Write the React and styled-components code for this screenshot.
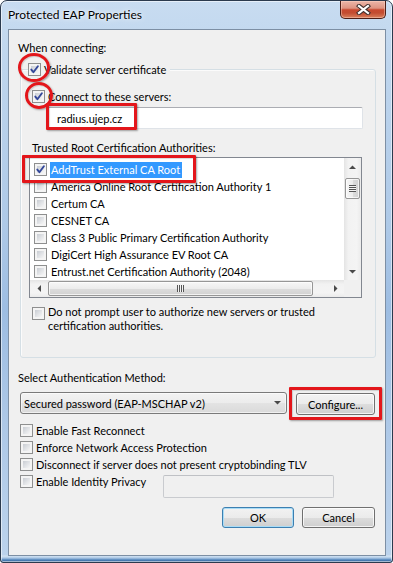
import React from "react";
import styled, { createGlobalStyle } from "styled-components";

const GlobalStyle = createGlobalStyle`
  * { box-sizing: border-box; }
  html, body { margin: 0; padding: 0; background: #ffffff; }
  body {
    font-family: Lato, "Liberation Sans", Arial, sans-serif;
    font-size: 11px;
    color: #000;
  }
`;

const Window = styled.div`
  width: 393px;
  height: 563px;
  display: flex;
  flex-direction: column;
  border: 1px solid #2b3a4e;
  border-radius: 7px 7px 3px 3px;
  overflow: hidden;
  background:
    linear-gradient(to bottom, transparent 0, transparent 554px, #d4e4f3 555px, #a9c6e4 557px, #4f82ba 559px, #2c5b90 561px),
    linear-gradient(to bottom, #c8dcf1 0%, #bed5ed 12%, #aec9e7 40%, #9dbde2 55%, #adc8e7 75%, #bcd3ec 100%);
  box-shadow: inset 0 0 0 1px rgba(255, 255, 255, 0.55);
`;

const TitleBar = styled.div`
  flex: 0 0 28px;
  height: 28px;
  display: flex;
  align-items: flex-start;
  justify-content: space-between;
  padding: 0 6px 0 7px;
`;

const Title = styled.div`
  margin-top: 6px;
  line-height: 15px;
  font-size: 12px;
  color: #000;
  text-shadow: 0 0 6px rgba(255, 255, 255, 0.95), 0 0 2px rgba(255, 255, 255, 0.8);
`;

const CloseButton = styled.div`
  width: 46px;
  height: 18px;
  display: flex;
  align-items: center;
  justify-content: center;
  border: 1px solid #4d1e16;
  border-top: none;
  border-radius: 0 0 5px 5px;
  background: linear-gradient(to bottom, #ecb6a8 0%, #de9482 42%, #c8492f 52%, #c24c31 70%, #d9805c 100%);
  box-shadow: inset 0 0 0 1px rgba(255, 215, 200, 0.45);
`;

const Client = styled.div`
  position: relative;
  flex: 1;
  margin: 0 6px 6px 7px;
  border: 1px solid #7d8fa4;
  background: #f0f0f0;
  padding: 0 9px;
  display: flex;
  flex-direction: column;
  align-items: flex-start;
`;

const Text = styled.div`
  line-height: 15px;
  white-space: nowrap;
  margin: ${(p) => p.$mt || 0}px 0 0 ${(p) => p.$ml || 0}px;
`;

const Group = styled.div`
  margin: 14px 0 0 2px;
  width: 356px;
  height: 289px;
  border: 1px solid #d5dfe5;
  border-radius: 3px;
  box-shadow: inset 1px 1px 0 #fbfbfb;
  display: flex;
  flex-direction: column;
  align-items: flex-start;
`;

const Legend = styled.div`
  display: flex;
  align-items: center;
  gap: 3px;
  height: 16px;
  margin: -9px 0 0 7px;
  padding-right: 4px;
  background: #f0f0f0;
  white-space: nowrap;
`;

const CheckRow = styled.div`
  display: flex;
  align-items: ${(p) => (p.$top ? "flex-start" : "center")};
  gap: 3px;
  height: ${(p) => (p.$h ? `${p.$h}px` : "auto")};
  width: ${(p) => (p.$w ? `${p.$w}px` : "auto")};
  margin: ${(p) => p.$mt || 0}px 0 0 ${(p) => p.$ml || 0}px;
  white-space: nowrap;
`;

const MultiLine = styled.div`
  line-height: 14px;
`;

const BoxOuter = styled.span`
  position: relative;
  flex: 0 0 13px;
  width: 13px;
  height: 13px;
  margin-top: ${(p) => p.$mt || 0}px;
  border: 1px solid #8e8f8f;
  background: #f4f4f4;
  display: grid;
  place-items: center;
  &::before {
    content: "";
    position: absolute;
    inset: 1px;
    border: 1px solid #f4f4f4;
    background: linear-gradient(135deg, #c9cdd3 0%, #e2e4e7 55%, #f6f6f6 100%);
  }
  & > svg {
    position: relative;
    z-index: 1;
  }
`;

const CheckBox = ({ checked, mt }) => (
  <BoxOuter $mt={mt}>
    {checked && (
      <svg width="11" height="11" viewBox="0 0 11 11">
        <path
          d="M2.3 5.6 L4.4 8.2 L8.9 2.2"
          fill="none"
          stroke="#34489a"
          strokeWidth="1.9"
          strokeLinecap="round"
          strokeLinejoin="round"
        />
      </svg>
    )}
  </BoxOuter>
);

const TextField = styled.div`
  width: ${(p) => p.$w}px;
  height: ${(p) => p.$h}px;
  margin: ${(p) => p.$mt || 0}px 0 0 ${(p) => p.$ml || 0}px;
  border: 1px solid ${(p) => (p.$disabled ? "#c9cbcf" : "#dfe3e8")};
  border-top-color: ${(p) => (p.$disabled ? "#bfc1c5" : "#abadb3")};
  border-radius: 2px;
  background: ${(p) => (p.$disabled ? "#f0f0f0" : "#ffffff")};
  padding-left: 9px;
  display: flex;
  align-items: center;
  white-space: nowrap;
`;

const ListBox = styled.div`
  margin: 2px 0 0 8px;
  width: 333px;
  height: 141px;
  border: 1px solid #828790;
  background: #fff;
  display: grid;
  grid-template-columns: 314px 17px;
  grid-template-rows: 122px 17px;
`;

const ListItems = styled.div`
  padding-top: 3px;
  overflow: hidden;
`;

const ListRow = styled.div`
  display: flex;
  align-items: center;
  height: 17px;
  padding-left: 4px;
  white-space: nowrap;
`;

const ItemText = styled.span`
  margin-left: 3px;
  padding: 0 2px 0 1px;
  line-height: 16px;
  background: ${(p) => (p.$selected ? "#3399ff" : "transparent")};
  color: ${(p) => (p.$selected ? "#ffffff" : "#000000")};
`;

const VScroll = styled.div`
  display: flex;
  flex-direction: column;
  align-items: center;
  background: linear-gradient(to right, #e4e4e4, #f2f2f2 25%, #f4f4f4 75%, #ebebeb);
`;

const HScroll = styled.div`
  display: flex;
  align-items: center;
  background: linear-gradient(to bottom, #e4e4e4, #f2f2f2 25%, #f4f4f4 75%, #ebebeb);
`;

const Corner = styled.div`
  background: #f0f0f0;
`;

const ArrowBtn = styled.div`
  flex: 0 0 17px;
  width: 17px;
  height: 17px;
  display: grid;
  place-items: center;
  margin-top: ${(p) => (p.$end ? "auto" : "0")};
  margin-left: ${(p) => (p.$push ? "auto" : "0")};
`;

const VThumb = styled.div`
  width: 15px;
  height: 21px;
  margin-top: 3px;
  border: 1px solid #969696;
  border-radius: 2px;
  background: linear-gradient(to right, #f7f7f7, #ececec 50%, #dcdcdc 52%, #d2d2d2);
  box-shadow: inset 0 0 0 1px rgba(255, 255, 255, 0.7);
  display: grid;
  place-items: center;
`;

const HThumb = styled.div`
  width: 265px;
  height: 15px;
  margin-left: 1px;
  border: 1px solid #969696;
  border-radius: 2px;
  background: linear-gradient(to bottom, #f7f7f7, #ececec 50%, #dcdcdc 52%, #d2d2d2);
  box-shadow: inset 0 0 0 1px rgba(255, 255, 255, 0.7);
  display: grid;
  place-items: center;
`;

const GripH = styled.span`
  width: 7px;
  height: 7px;
  background: repeating-linear-gradient(to bottom, #555 0 1px, #f4f4f4 1px 2px);
`;

const GripV = styled.span`
  width: 7px;
  height: 7px;
  background: repeating-linear-gradient(to right, #555 0 1px, #f4f4f4 1px 2px);
`;

const Row = styled.div`
  display: flex;
  align-items: flex-start;
  gap: ${(p) => p.$gap || 0}px;
  margin: ${(p) => p.$mt || 0}px 0 0 ${(p) => p.$ml || 0}px;
  align-self: ${(p) => (p.$stretch ? "stretch" : "auto")};
  justify-content: ${(p) => (p.$end ? "flex-end" : "flex-start")};
  padding-right: ${(p) => p.$pr || 0}px;
`;

const Combo = styled.div`
  width: 267px;
  height: 22px;
  border: 1px solid #7a7a7a;
  border-radius: 3px;
  background: linear-gradient(to bottom, #f3f3f3, #ececec 50%, #e3e3e3 51%, #dadada);
  box-shadow: inset 0 0 0 1px rgba(255, 255, 255, 0.6);
  display: flex;
  align-items: center;
  justify-content: space-between;
  padding: 0 5px 0 3px;
  white-space: nowrap;
`;

const Button = styled.div`
  width: ${(p) => p.$w}px;
  height: ${(p) => p.$h}px;
  margin-top: ${(p) => p.$mt || 0}px;
  border: 1px solid ${(p) => (p.$default ? "#3c7fb1" : "#707070")};
  border-radius: 3px;
  background: linear-gradient(to bottom, #f2f2f2, #ebebeb 50%, #dddddd 51%, #cfcfcf);
  box-shadow: inset 0 0 0 1px ${(p) => (p.$default ? "#a9dcf6" : "rgba(255, 255, 255, 0.75)")};
  display: flex;
  align-items: center;
  justify-content: center;
  white-space: nowrap;
`;

const Mark = styled.div`
  position: absolute;
  left: ${(p) => p.$x}px;
  top: ${(p) => p.$y}px;
  width: ${(p) => p.$w}px;
  height: ${(p) => p.$h}px;
  border: 3px solid #e3161b;
  border-radius: ${(p) => (p.$round ? "50%" : "1px")};
  box-shadow: 1px 1px 2px rgba(0, 0, 0, 0.35), inset 1px 1px 1px rgba(0, 0, 0, 0.15);
  pointer-events: none;
`;

const Tri = ({ dir }) => {
  const paths = {
    up: "M0 4 L3.5 0.5 L7 4 Z",
    down: "M0 0 L3.5 3.5 L7 0 Z",
    left: "M4 0 L0.5 3.5 L4 7 Z",
    right: "M0 0 L3.5 3.5 L0 7 Z",
  };
  const vert = dir === "up" || dir === "down";
  return (
    <svg width={vert ? 7 : 4} height={vert ? 4 : 7} viewBox={vert ? "0 0 7 4" : "0 0 4 7"}>
      <path d={paths[dir]} fill="#4a4a4a" />
    </svg>
  );
};

const certs = [
  { name: "AddTrust External CA Root", checked: true, selected: true },
  { name: "America Online Root Certification Authority 1" },
  { name: "Certum CA" },
  { name: "CESNET CA" },
  { name: "Class 3 Public Primary Certification Authority" },
  { name: "DigiCert High Assurance EV Root CA" },
  { name: "Entrust.net Certification Authority (2048)" },
];

export default function App() {
  return (
    <>
      <GlobalStyle />
      <Window>
        <TitleBar>
          <Title>Protected EAP Properties</Title>
          <CloseButton>
            <svg width="15" height="11" viewBox="0 0 15 11">
              <path d="M3 2 L12 9 M12 2 L3 9" stroke="#40302e" strokeWidth="4.2" strokeLinecap="square" />
              <path d="M3 2 L12 9 M12 2 L3 9" stroke="#ffffff" strokeWidth="2.2" strokeLinecap="square" />
            </svg>
          </CloseButton>
        </TitleBar>
        <Client>
          <Text $mt={10}>When connecting:</Text>
          <Group>
            <Legend>
              <CheckBox checked />
              <span>Validate server certificate</span>
            </Legend>
            <CheckRow $h={16} $mt={11} $ml={11}>
              <CheckBox checked />
              <span>Connect to these servers:</span>
            </CheckRow>
            <TextField $w={316} $h={22} $mt={3} $ml={26}>
              radius.ujep.cz
            </TextField>
            <Text $mt={11} $ml={11}>Trusted Root Certification Authorities:</Text>
            <ListBox>
              <ListItems>
                {certs.map((c) => (
                  <ListRow key={c.name}>
                    <CheckBox checked={c.checked} />
                    <ItemText $selected={c.selected}>{c.name}</ItemText>
                  </ListRow>
                ))}
              </ListItems>
              <VScroll>
                <ArrowBtn>
                  <Tri dir="up" />
                </ArrowBtn>
                <VThumb>
                  <GripH />
                </VThumb>
                <ArrowBtn $end>
                  <Tri dir="down" />
                </ArrowBtn>
              </VScroll>
              <HScroll>
                <ArrowBtn>
                  <Tri dir="left" />
                </ArrowBtn>
                <HThumb>
                  <GripV />
                </HThumb>
                <ArrowBtn $push>
                  <Tri dir="right" />
                </ArrowBtn>
              </HScroll>
              <Corner />
            </ListBox>
            <CheckRow $top $mt={7} $ml={11}>
              <CheckBox mt={2} />
              <MultiLine>
                Do not prompt user to authorize new servers or trusted
                <br />
                certification authorities.
              </MultiLine>
            </CheckRow>
          </Group>
          <Text $mt={12}>Select Authentication Method:</Text>
          <Row $mt={7} $ml={2} $gap={9}>
            <Combo>
              <span>Secured password (EAP-MSCHAP v2)</span>
              <Tri dir="down" />
            </Combo>
            <Button $w={79} $h={22} $mt={1}>
              Configure...
            </Button>
          </Row>
          <CheckRow $h={17} $mt={7} $ml={2}>
            <CheckBox />
            <span>Enable Fast Reconnect</span>
          </CheckRow>
          <CheckRow $h={17} $ml={2}>
            <CheckBox />
            <span>Enforce Network Access Protection</span>
          </CheckRow>
          <CheckRow $h={17} $ml={2}>
            <CheckBox />
            <span>Disconnect if server does not present cryptobinding TLV</span>
          </CheckRow>
          <Row $ml={2}>
            <CheckRow $h={17} $w={143}>
              <CheckBox />
              <span>Enable Identity Privacy</span>
            </CheckRow>
            <TextField $w={171} $h={23} $mt={2} $disabled />
          </Row>
          <Row $stretch $end $mt={9} $pr={1} $gap={8}>
            <Button $w={72} $h={21} $default>
              OK
            </Button>
            <Button $w={73} $h={21}>
              Cancel
            </Button>
          </Row>

          <Mark $round $x={9} $y={23} $w={32} $h={29} />
          <Mark $round $x={16} $y={52} $w={28} $h={27} />
          <Mark $x={37} $y={73} $w={91} $h={27} />
          <Mark $x={13} $y={125} $w={174} $h={28} />
          <Mark $x={280} $y={357} $w={93} $h={33} />
        </Client>
      </Window>
    </>
  );
}
